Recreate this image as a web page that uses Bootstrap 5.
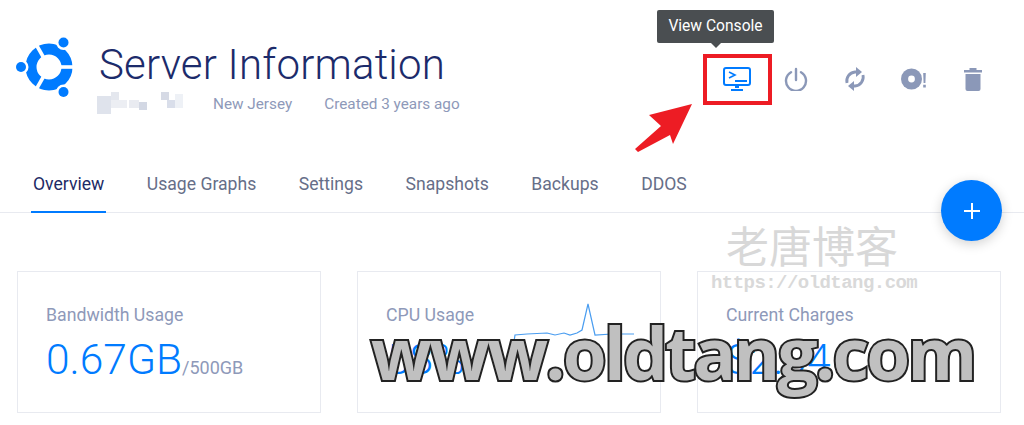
<!DOCTYPE html>
<html lang="en">
<head>
    <meta charset="UTF-8">
    <meta name="viewport" content="width=device-width, initial-scale=1.0">
    <title>Server Information</title>
    <link href="https://cdn.jsdelivr.net/npm/bootstrap@5.3.0/dist/css/bootstrap.min.css" rel="stylesheet">
    <style>
        html, body { height: 425px; overflow: hidden; }
        body { background: #fff; font-family: Roboto, "Liberation Sans", sans-serif; color: #1d2a66; position: relative; }
        .srv-head { height: 158px; padding: 37px 0 0 16px; }
        .srv-logo { width: 58px; height: 60px; flex: none; }
        .srv-title { font-size: 42px; font-weight: 300; line-height: 50px; margin: 0; color: #1c2b6b; letter-spacing: .2px; }
        .srv-titlebox { margin-left: 25px; margin-top: 3px; }
        .srv-meta { font-size: 15.3px; color: #8e99b9; height: 24px; margin-top: 2px; }
        .srv-blur { width: 86px; height: 24px; margin-left: -2px; margin-right: 30px; }
        .srv-actions { padding: 27px 22px 0 0; }
        .srv-act { width: 59px; height: 30px; display: flex; justify-content: center; align-items: center; }
        .srv-tabs { height: 55px; border-bottom: 1px solid #e8eaf0; padding-left: 31px; gap: 38.5px; }
        .srv-tabs .nav-link { font-size: 17.6px; color: #666e88; padding: 13px 2px 0; height: 55px; border-bottom: 2px solid transparent; }
        .srv-tabs .nav-link.active { color: #1d2a66; border-bottom-color: #007bff; }
        .srv-cards { padding: 58px 23px 0 17px; gap: 36px; }
        .srv-card { flex: 1 1 0; height: 142px; border: 1px solid #e8eaf0; border-radius: 0; padding: 30px 28px; position: relative; }
        .srv-label { font-size: 17.7px; color: #8e99b9; line-height: 26px; }
        .srv-value { font-size: 42.5px; font-weight: 300; color: #007bff; line-height: 50px; margin-top: 7px; }
        .srv-value small { font-size: 18px; color: #8e99b9; font-weight: 400; }
        .srv-spark { position: absolute; left: 154px; top: 27px; }
        .srv-tip { position: absolute; left: 657px; top: 10px; width: 117px; height: 33px; background: #4a4e51; color: #fff; font-size: 15.6px; border-radius: 2px; text-align: center; line-height: 33px; }
        .srv-tip::after { content: ""; position: absolute; left: 50%; margin-left: -5px; top: 33px; border: 5px solid transparent; border-bottom: 0; border-top-color: #4a4e51; }
        .srv-redbox { position: absolute; left: 703px; top: 54px; width: 69px; height: 51px; border: 4px solid #ed1c24; }
        .srv-arrow { position: absolute; left: 630px; top: 100px; }
        .srv-fab { position: absolute; left: 941px; top: 180px; width: 61px; height: 61px; border-radius: 50%; background: #007bff; box-shadow: 0 3px 12px rgba(0, 0, 0, .18); }
        .wm-cn { position: absolute; left: 726px; top: 214px; font-family: "Noto Sans CJK SC", sans-serif; font-size: 43px; line-height: 60px; color: #d8d8d8; font-weight: 400; }
        .wm-url { position: absolute; left: 711px; top: 271px; font-family: "Liberation Mono", monospace; font-weight: 700; font-size: 19px; letter-spacing: -.55px; line-height: 24px; color: #d9d9d9; }
        .wm-main { position: absolute; left: 371px; top: 305px; font-family: "Open Sans", sans-serif; font-weight: 700; font-size: 71px; line-height: 96px; color: #c0c0c0; -webkit-text-stroke: 4px #222; paint-order: stroke fill; white-space: nowrap; letter-spacing: -2.700px; }
    </style>
</head>
<body>
    <div class="srv-head d-flex justify-content-between">
        <div class="d-flex">
            <svg class="srv-logo" viewBox="0 0 58 60">
                <circle cx="33" cy="30" r="18" fill="none" stroke="#007bff" stroke-width="11"/>
                <g stroke="#fff" stroke-width="3.6">
                    <path d="M33 30H58"/>
                    <path d="M33 30L17 58"/>
                    <path d="M33 30L17 2"/>
                </g>
                <g fill="#fff">
                    <circle cx="47.5" cy="5.5" r="7.500"/>
                    <circle cx="47.5" cy="55" r="7.500"/>
                    <circle cx="5" cy="30" r="7.500"/>
                </g>
                <g fill="#007bff">
                    <circle cx="47.5" cy="5.5" r="5"/>
                    <circle cx="47.5" cy="55" r="5"/>
                    <circle cx="5" cy="30" r="5"/>
                </g>
            </svg>
            <div class="srv-titlebox">
                <h1 class="srv-title">Server Information</h1>
                <div class="srv-meta d-flex align-items-center">
                    <svg class="srv-blur" viewBox="0 0 86 24">
                        <g fill="#dfe3ec">
                            <rect x="0" y="4" width="14" height="18"/>
                            <rect x="14" y="8" width="16" height="8" fill="#eceef3"/>
                            <rect x="14" y="0" width="8" height="8" fill="#e4e7ee"/>
                            <rect x="32" y="8" width="10" height="8" fill="#e9ebf1"/>
                            <rect x="42" y="10" width="8" height="8" fill="#d3d8e4"/>
                            <rect x="64" y="0" width="8" height="8" fill="#d6dae5"/>
                            <rect x="70" y="8" width="8" height="8" fill="#d9deea"/>
                            <rect x="78" y="2" width="8" height="14" fill="#eef1f6"/>
                        </g>
                    </svg>
                    <span>New Jersey</span>
                    <span class="ms-4 ps-2">Created 3 years ago</span>
                </div>
            </div>
        </div>
        <div class="srv-actions d-flex align-items-start">
            <div class="srv-act">
                <svg width="28" height="25" viewBox="0 0 28 25">
                    <rect x="1" y="1" width="26" height="17" rx="2" fill="none" stroke="#007bff" stroke-width="2"/>
                    <path d="M6 5l6 3-6 3" fill="none" stroke="#007bff" stroke-width="1.6"/>
                    <path d="M12 14h12" stroke="#007bff" stroke-width="2"/>
                    <path d="M12 18h4v3h-4zM8 22h12v2H8z" fill="#007bff"/>
                </svg>
            </div>
            <div class="srv-act">
                <svg width="24" height="24" viewBox="0 0 24 24" fill="none" stroke="#8b98b8" stroke-width="2.4" stroke-linecap="round">
                    <path d="M12 2v11"/>
                    <path d="M7 5.2a10 10 0 1 0 10 0"/>
                </svg>
            </div>
            <div class="srv-act">
                <svg width="22" height="24" viewBox="0 0 22 24" fill="none" stroke="#8b98b8" stroke-width="2.8">
                    <path d="M3 16a9 9 0 0 1 8-11h3"/>
                    <path d="M19 8a9 9 0 0 1-8 11H8"/>
                    <path d="M12 0l6 5-6 5z" fill="#8b98b8" stroke="none"/>
                    <path d="M10 14l-6 5 6 5z" fill="#8b98b8" stroke="none"/>
                </svg>
            </div>
            <div class="srv-act">
                <svg width="26" height="22" viewBox="0 0 26 22">
                    <circle cx="10.5" cy="11" r="10.5" fill="#8b98b8"/>
                    <circle cx="10.5" cy="11" r="3.4" fill="#fff"/>
                    <path d="M22.2 5h2.6l-.4 10h-1.8zM22.2 16.800h2.600v2.600h-2.600z" fill="#8b98b8"/>
                </svg>
            </div>
            <div class="srv-act">
                <svg width="18" height="23" viewBox="0 0 18 23" fill="#8b98b8">
                    <rect x="0" y="2" width="18" height="2.500"/>
                    <rect x="5.500" y="0" width="7" height="2"/>
                    <path d="M1.500 6h15v15a2 2 0 0 1-2 2h-11a2 2 0 0 1-2-2z"/>
                </svg>
            </div>
        </div>
    </div>

    <ul class="nav srv-tabs">
        <li class="nav-item"><a class="nav-link active" href="#">Overview</a></li>
        <li class="nav-item"><a class="nav-link" href="#">Usage Graphs</a></li>
        <li class="nav-item"><a class="nav-link" href="#">Settings</a></li>
        <li class="nav-item"><a class="nav-link" href="#">Snapshots</a></li>
        <li class="nav-item"><a class="nav-link" href="#">Backups</a></li>
        <li class="nav-item"><a class="nav-link" href="#">DDOS</a></li>
    </ul>

    <div class="srv-cards d-flex">
        <div class="srv-card">
            <div class="srv-label">Bandwidth Usage</div>
            <div class="srv-value">0.67GB<small>/500GB</small></div>
        </div>
        <div class="srv-card">
            <div class="srv-label">CPU Usage</div>
            <div class="srv-value">58%</div>
            <svg class="srv-spark" width="124" height="60" viewBox="0 0 124 60" fill="none" stroke="#4a9df0" stroke-width="1.200">
                <polyline points="0,56 3,36 15,35 35,34 43,36 52,34 58,36 65,34 70,31 76,5 83,36 100,35 122,35"/>
            </svg>
        </div>
        <div class="srv-card">
            <div class="srv-label">Current Charges</div>
            <div class="srv-value">$2.04</div>
        </div>
    </div>

    <div class="srv-tip">View Console</div>
    <div class="srv-redbox"></div>
    <svg class="srv-arrow" width="70" height="56" viewBox="630 100 70 56">
        <polygon fill="#ed1c24" points="692,104 649,115 661,126 635,149 638,152 670,135 673,144"/>
    </svg>
    <div class="srv-fab d-flex justify-content-center align-items-center">
        <svg width="18" height="18" viewBox="0 0 18 18"><path d="M8 1h2v7h7v2h-7v7H8v-7H1V8h7z" fill="#fff"/></svg>
    </div>
    <div class="wm-cn">老唐博客</div>
    <div class="wm-url">https://oldtang.com</div>
    <div class="wm-main">www.oldtang.com</div>

    <script src="https://cdn.jsdelivr.net/npm/bootstrap@5.3.0/dist/js/bootstrap.bundle.min.js"></script>
</body>
</html>
